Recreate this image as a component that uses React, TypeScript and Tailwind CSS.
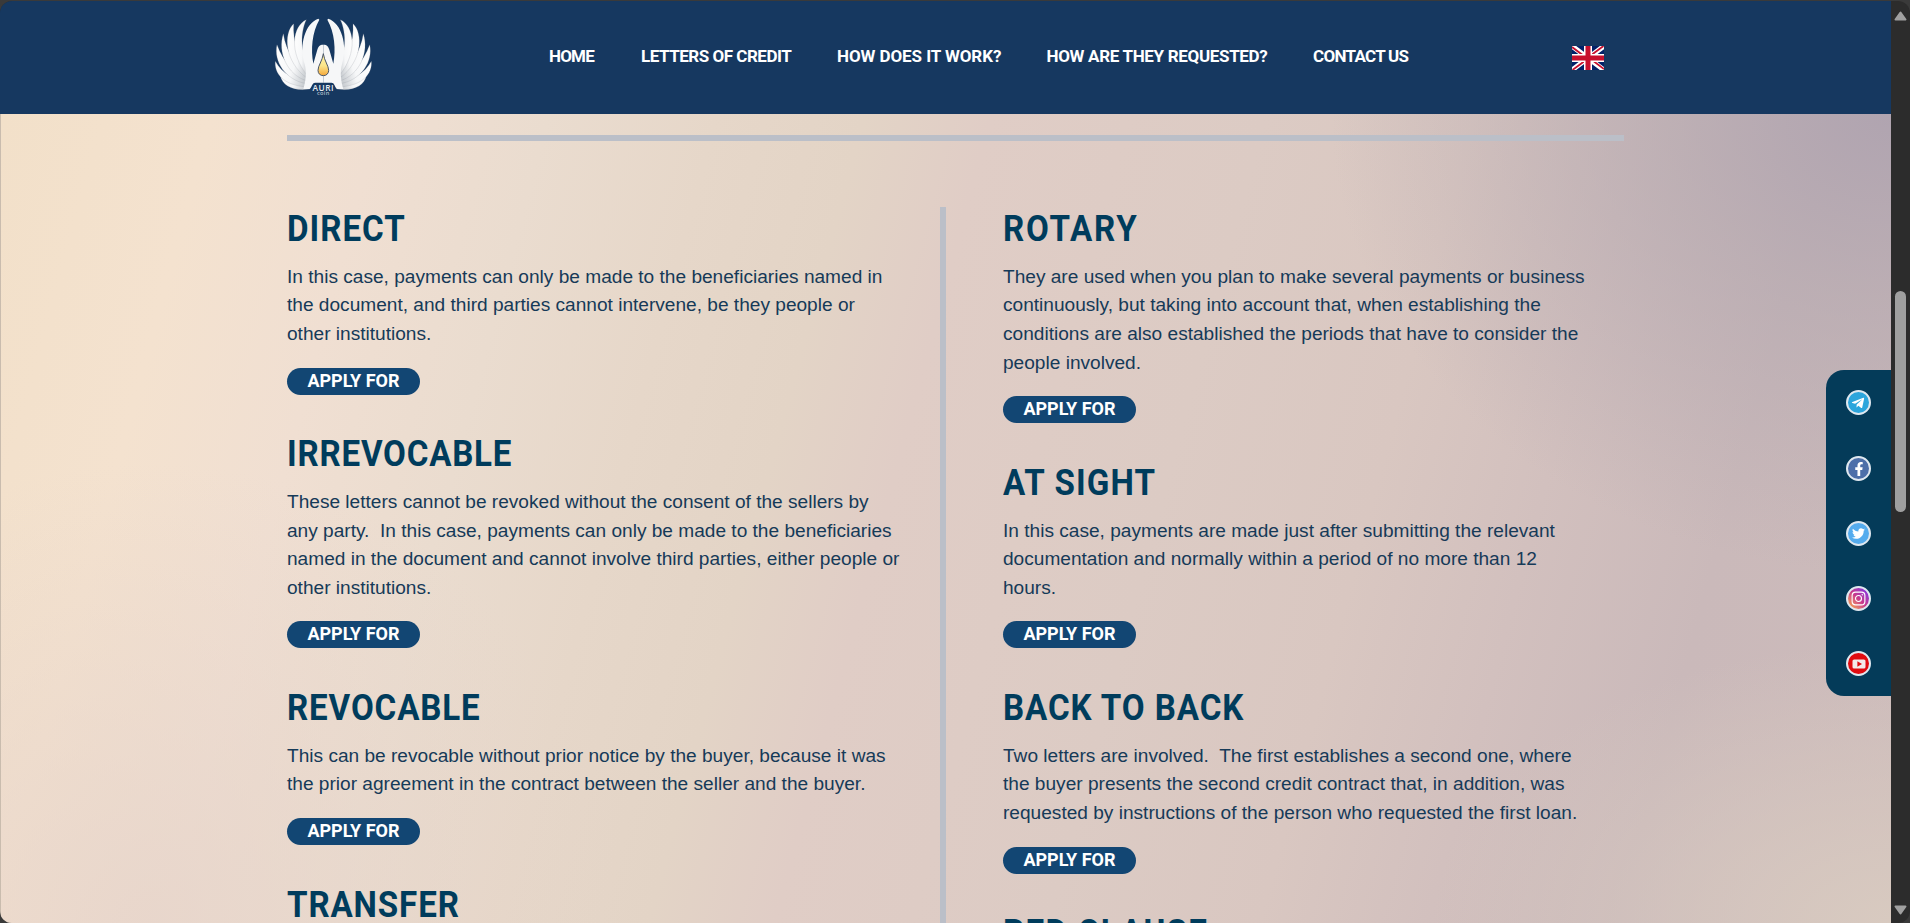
import React from "react";
import { FaFacebookF, FaTelegramPlane, FaTwitter } from "react-icons/fa";

type Item = { title: string; tracking: string; lines: string[] };

const NAV = [
  { label: "HOME", cls: "w-[46px] tracking-[-0.8px]" },
  { label: "LETTERS OF CREDIT", cls: "w-[150px] tracking-[-0.48px]" },
  { label: "HOW DOES IT WORK?", cls: "w-[163.5px] tracking-[-0.08px]" },
  { label: "HOW ARE THEY REQUESTED?", cls: "w-[220.5px] tracking-[-0.32px]" },
  { label: "CONTACT US", cls: "w-[94px] tracking-[-0.7px]" },
];

const LEFT: Item[] = [
  {
    title: "DIRECT",
    tracking: "tracking-[1.1px]",
    lines: [
      "In this case, payments can only be made to the beneficiaries named in",
      "the document, and third parties cannot intervene, be they people or",
      "other institutions.",
    ],
  },
  {
    title: "IRREVOCABLE",
    tracking: "tracking-[0.85px]",
    lines: [
      "These letters cannot be revoked without the consent of the sellers by",
      "any party.  In this case, payments can only be made to the beneficiaries",
      "named in the document and cannot involve third parties, either people or",
      "other institutions.",
    ],
  },
  {
    title: "REVOCABLE",
    tracking: "tracking-[0.95px]",
    lines: [
      "This can be revocable without prior notice by the buyer, because it was",
      "the prior agreement in the contract between the seller and the buyer.",
    ],
  },
  { title: "TRANSFER", tracking: "tracking-[0.95px]", lines: [] },
];

const RIGHT: Item[] = [
  {
    title: "ROTARY",
    tracking: "tracking-[1.9px]",
    lines: [
      "They are used when you plan to make several payments or business",
      "continuously, but taking into account that, when establishing the",
      "conditions are also established the periods that have to consider the",
      "people involved.",
    ],
  },
  {
    title: "AT SIGHT",
    tracking: "tracking-[1.2px]",
    lines: [
      "In this case, payments are made just after submitting the relevant",
      "documentation and normally within a period of no more than 12",
      "hours.",
    ],
  },
  {
    title: "BACK TO BACK",
    tracking: "tracking-[1px]",
    lines: [
      "Two letters are involved.  The first establishes a second one, where",
      "the buyer presents the second credit contract that, in addition, was",
      "requested by instructions of the person who requested the first loan.",
    ],
  },
  { title: "RED CLAUSE", tracking: "tracking-[1.4px]", lines: [] },
];

function Wing() {
  return (
    <g fill="url(#feather)" stroke="#7d8791" strokeWidth="0.6">
      <path d="M61 212 C66 238 92 254 128 254 L150 252 L152 236 C112 240 80 232 61 212Z" />
      <path d="M46 169 C42 206 72 242 142 246 L150 228 C104 226 66 206 46 169Z" />
      <path d="M51 119 C40 168 76 226 140 236 L150 220 C104 206 70 172 51 119Z" />
      <path d="M70 86 C52 140 80 210 142 228 L150 208 C110 184 78 142 70 86Z" />
      <path d="M101 56 C70 84 72 170 142 220 L150 192 C114 162 98 108 101 56Z" />
      <path d="M139 44 C98 62 84 142 144 214 L152 180 C120 150 120 84 139 44Z" />
      <path
        d="M175 41 C136 54 116 120 134 178 C140 200 138 226 130 252 L148 252 C158 246 154 234 166 233 L190 233 L190 119 C178 119 176 124 172 134 L160 176 C152 134 156 82 178 44Z"
        fill="#f6f7f8"
        stroke="none"
      />
    </g>
  );
}

function Logo() {
  return (
    <svg viewBox="0 0 375 315" className="h-[105px] w-[125px] shrink-0">
      <defs>
        <linearGradient id="feather" x1="0" y1="0" x2="1" y2="0.3">
          <stop offset="0" stopColor="#fff" />
          <stop offset="0.6" stopColor="#f6f7f8" />
          <stop offset="1" stopColor="#c9cdd1" />
        </linearGradient>
        <linearGradient id="drop" x1="0" y1="0" x2="0" y2="1">
          <stop offset="0" stopColor="#fff3a8" />
          <stop offset="0.55" stopColor="#fbe58a" />
          <stop offset="1" stopColor="#f5a83a" />
        </linearGradient>
      </defs>
      <Wing />
      <g transform="translate(380 0) scale(-1 1)">
        <Wing />
      </g>
      <path
        d="M190 146 C187 168 174 182 174 196 C174 206 181 212 190 212 C199 212 206 206 206 196 C206 182 193 168 190 146Z"
        fill="url(#drop)"
        stroke="#4b5666"
        strokeWidth="3"
      />
      <text x="190" y="257" textAnchor="middle" fontSize="25" fontWeight="600" letterSpacing="1.5" fill="#e8edf2" fontFamily="Open Sans, sans-serif">
        AURI
      </text>
      <text x="190" y="271" textAnchor="middle" fontSize="17" fontWeight="600" letterSpacing="1" fill="#b4c0cc" fontFamily="Open Sans, sans-serif">
        coin
      </text>
    </svg>
  );
}

function Flag() {
  return (
    <svg viewBox="0 0 32 24" className="h-6 w-8 shrink-0">
      <path fill="#012169" d="M0 0h32v24H0z" />
      <path stroke="#fff" strokeWidth="5" d="M0 0l32 24M32 0L0 24" />
      <path stroke="#c8102e" strokeWidth="1.8" d="M0 1l14 10.5M32 23L18 12.5M31.5 0L18 10M0.5 24L14 14" />
      <path stroke="#fff" strokeWidth="8" d="M16 0v24M0 12h32" />
      <path stroke="#c8102e" strokeWidth="5" d="M16 0v24M0 12h32" />
    </svg>
  );
}

function Column({ items }: { items: Item[] }) {
  return (
    <div className="flex w-[653px] shrink-0 flex-col pt-px">
      {items.map((it) => (
        <section key={it.title} className="mb-[38.6px] flex flex-col items-start">
          <h2
            className={`origin-left scale-x-[0.92] whitespace-pre font-[Roboto,sans-serif] text-[36px] font-bold leading-[43px] text-[#003c5c] ${it.tracking}`}
          >
            {it.title}
          </h2>
          {it.lines.length > 0 && (
            <>
              <p className="mt-[11.8px] whitespace-pre text-[19.1px] leading-[28.6px] text-[#163a58]">{it.lines.join("\n")}</p>
              <button className="mt-[19px] h-[27px] w-[133px] rounded-full bg-[#124673] pb-px font-[Roboto,sans-serif] text-[18px] font-bold leading-[26px] text-white">
                APPLY FOR
              </button>
            </>
          )}
        </section>
      ))}
    </div>
  );
}

const RING = "flex size-[25px] items-center justify-center rounded-full border-2 border-[#dfe8f0] text-white";

function Social() {
  return (
    <aside className="absolute right-[19px] top-[370px] flex h-[326px] w-[65px] flex-col items-center justify-between rounded-l-[18px] bg-[#043b59] pb-[20px] pt-[20px]">
      <span className={`${RING} bg-[#2ca5dc]`}>
        <FaTelegramPlane size={14} className="-translate-x-px" />
      </span>
      <span className={`${RING} translate-y-px bg-[#4d6fa9]`}>
        <FaFacebookF size={14} />
      </span>
      <span className={`${RING} bg-[#55acee]`}>
        <FaTwitter size={13} />
      </span>
      <span className={`${RING} bg-linear-to-bl from-[#7a0cf0] via-[#c8378c] to-[#ffb300]`}>
        <svg viewBox="0 0 16 16" className="size-[15px] shrink-0" fill="none" stroke="#fff" strokeWidth="1.2">
          <rect x="1.2" y="1.2" width="13.6" height="13.6" rx="3.6" />
          <circle cx="8" cy="8" r="3.2" />
          <circle cx="12" cy="4" r="0.5" fill="#fff" strokeWidth="0.6" />
        </svg>
      </span>
      <span className={`${RING} bg-[#e00b10]`}>
        <svg viewBox="0 0 14 10" className="h-[10px] w-[14px] shrink-0">
          <rect x="0.5" y="0.5" width="13" height="9" rx="1.6" fill="#f3e9e9" />
          <path d="M5.4 2.3L10 5L5.4 7.7Z" fill="#e00b10" />
        </svg>
      </span>
    </aside>
  );
}

export default function App() {
  return (
    <div className="relative h-[923px] w-[1910px] overflow-hidden bg-[#3a3a3a] pt-px font-['Liberation_Sans',Arial,sans-serif]">
      <div className="flex h-[922px] overflow-hidden rounded-[12px] bg-[#2c2c2c]">
        <div className="flex w-[1891px] shrink-0 flex-col overflow-hidden">
          <header className="flex h-[113px] shrink-0 items-start bg-[#163860] pl-[260px] pt-1">
            <Logo />
            <nav className="ml-[164px] mt-[39px] flex gap-[46px] font-[Roboto,sans-serif] text-[17px] font-bold leading-6 text-white">
              {NAV.map((n) => (
                <a key={n.label} className={`whitespace-nowrap ${n.cls}`}>
                  {n.label}
                </a>
              ))}
            </nav>
            <div className="ml-[165px] mt-[41px]">
              <Flag />
            </div>
          </header>
          <main className="flex grow flex-col overflow-hidden border-l border-[#c9bcae] bg-[radial-gradient(ellipse_560px_460px_at_100%_0%,#b0a4b0_0%,rgba(180,168,176,0.65)_40%,rgba(190,176,180,0)_100%),radial-gradient(ellipse_460px_280px_at_100%_100%,#d8cac0_0%,rgba(216,202,192,0)_100%),radial-gradient(ellipse_480px_460px_at_8%_100%,rgba(230,212,202,0.8)_0%,rgba(230,212,202,0)_100%),linear-gradient(105deg,#f2e0c9_0%,#f4e2cf_10%,#f0dfd2_18%,#eadccf_26%,#e6d7c9_34%,#e3d4c6_41%,#e0cdc6_47%,#dccbc4_60%,#d9c7c1_70%,#d2c0be_78%,#cab9ba_87%,#cdbbbb_100%)] pl-[286px]">
            <div className="mt-[21px] h-[6px] w-[1337px] shrink-0 bg-[#bbbfc8]" />
            <div className="mt-[66px] flex grow">
              <Column items={LEFT} />
              <div className="mr-[57px] w-[6px] shrink-0 bg-[#bbbfc8]" />
              <Column items={RIGHT} />
            </div>
          </main>
        </div>
        <div className="flex w-[19px] flex-col items-center">
          <svg viewBox="0 0 13 10" className="mt-[10px] h-[10px] w-[13px] shrink-0">
            <path d="M6.5 1.5L11.5 8.5H1.5Z" fill="#a0a0a0" stroke="#a0a0a0" strokeWidth="2" strokeLinejoin="round" />
          </svg>
          <div className="mt-[270px] h-[221px] w-[11px] shrink-0 rounded-full bg-[#9f9f9f]" />
          <svg viewBox="0 0 13 10" className="mt-[393px] h-[10px] w-[13px] shrink-0">
            <path d="M6.5 8.5L11.5 1.5H1.5Z" fill="#a0a0a0" stroke="#a0a0a0" strokeWidth="2" strokeLinejoin="round" />
          </svg>
        </div>
      </div>
      <Social />
    </div>
  );
}
